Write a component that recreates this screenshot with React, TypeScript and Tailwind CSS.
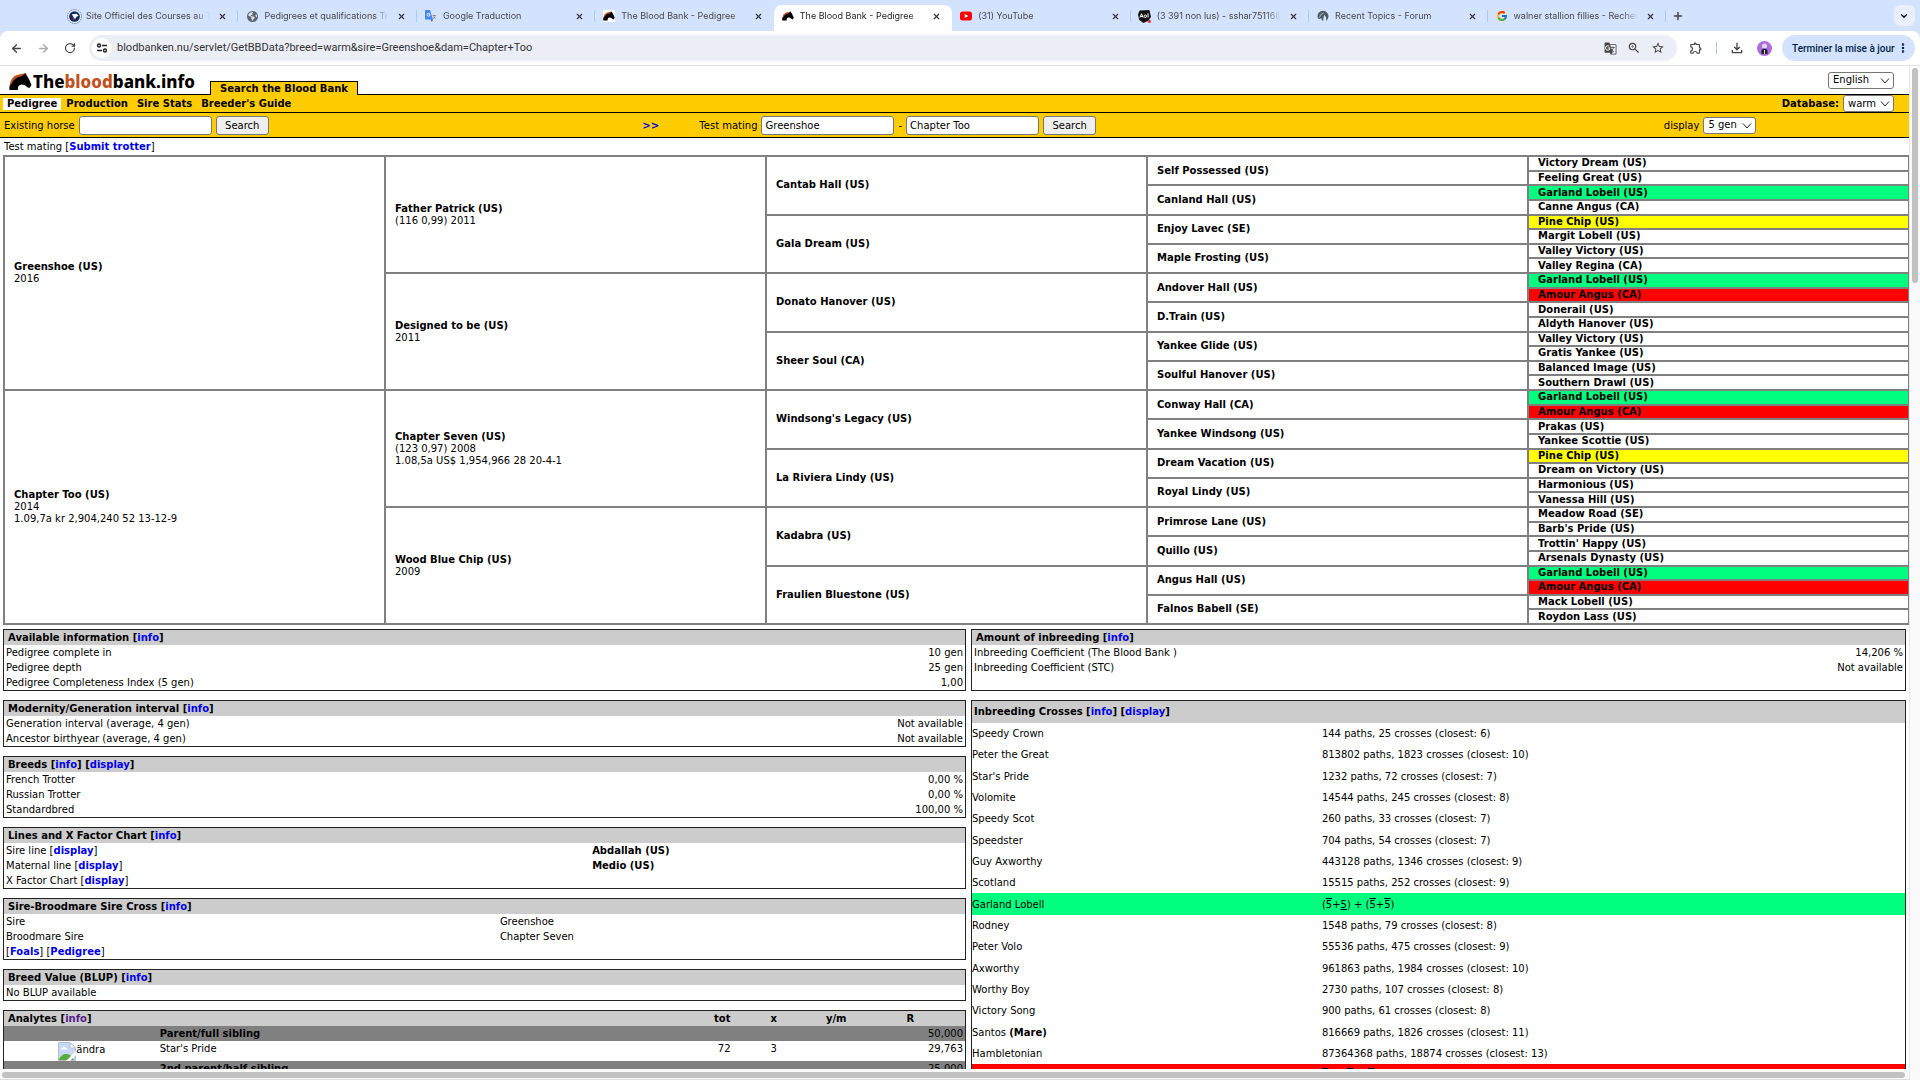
import React, { useState } from "react";
import { ArrowLeft, ArrowRight, ChevronDown, EllipsisVertical, Plus, RotateCw, X } from "lucide-react";
import { FcGoogle } from "react-icons/fc";
import { FaEarthAmericas } from "react-icons/fa6";
import { MdGTranslate, MdOutlineExtension, MdOutlineFileDownload, MdStarOutline, MdZoomIn } from "react-icons/md";

const Horse = ({ className }: { className?: string }) => (
  <svg viewBox="0 0 46 34" className={className} aria-hidden="true">
    <path d="M1 29 C1 20 4 12 10 7 C15 3 23 2 30 1 L34 0 L35 4 L22 8 C14 11 10 18 6 26 Z" fill="#c2501c" />
    <path
      d="M32 1 L35 4 C39 9 42 17 45 24 L41 30 C37 29 34 26 31 24 L25 23 C19 24 17 28 18 34 L1 34 C0 27 2 24 6 21 C9 12 16 8 26 6 Z"
      fill="#000"
    />
  </svg>
);

const CourseIcon = () => (
  <svg viewBox="0 0 28 28" className="size-[15px]" aria-hidden="true">
    <circle cx="14" cy="14" r="13" fill="#e8effc" stroke="#4a639a" strokeWidth="1.5" strokeDasharray="3 1.5" />
    <circle cx="14" cy="14" r="10" fill="#0f2a5c" />
    <path d="M9 10 L18 9 L22 13 L18 14 L15 19 L12 15 Z" fill="#fff" />
    <path d="M10 15 L14 19 L12 21 Z" fill="#d33" />
  </svg>
);

const TranslateIcon = () => (
  <svg viewBox="0 0 24 24" className="size-3" aria-hidden="true">
    <path d="M10 6 H22 Q24 6 24 8 V22 Q24 24 22 24 H14 Z" fill="#dfe1e5" />
    <path d="M2 0 H10 L16 19 H2 Q0 19 0 17 V2 Q0 0 2 0 Z" fill="#4486f4" />
    <path d="M11 19 H16 L14 24 Z" fill="#3057b9" />
    <circle cx="7" cy="9.5" r="3" fill="none" stroke="#fff" strokeWidth="1.6" />
    <path d="M7 9.5 H10" stroke="#fff" strokeWidth="1.6" />
    <path d="M15 11 H22 M18.5 9.5 V11 M20.5 11 Q19.5 16 15.5 18 M17 13 Q18.5 16 21.5 18" stroke="#6b7280" strokeWidth="1.3" fill="none" />
  </svg>
);

const YoutubeIcon = () => (
  <svg viewBox="0 0 24 24" className="size-3" aria-hidden="true">
    <rect x="0" y="3" width="24" height="18" rx="5" fill="#f00" />
    <path d="M9.5 8 L16.5 12 L9.5 16 Z" fill="#fff" />
  </svg>
);

const AolIcon = () => (
  <svg viewBox="0 0 24 24" className="size-[13px]" aria-hidden="true">
    <path d="M3 1 L21 0 L24 13 L19 20 L10 24 L2 18 L0 8 Z" fill="#111" />
    <path d="M3.5 14 L6.5 7 L9.5 14 M4.500 12 H8.5 M18.5 6 V14" stroke="#fff" strokeWidth="1.8" fill="none" />
    <circle cx="13.5" cy="11.5" r="2.3" stroke="#fff" strokeWidth="1.8" fill="none" />
    <circle cx="21" cy="21" r="3" fill="#e33" />
  </svg>
);

const ForumIcon = () => (
  <svg viewBox="0 0 24 24" className="size-3" aria-hidden="true">
    <path d="M1 13 A11 11 0 0 1 23 12 Q23 19 18 22 Q20 13 14 10 Q13 17 12 22 Q8 21 9 16 L5 18 Q1 18 1 13 Z" fill="#4f5b62" />
    <path d="M5 15 Q6 8 13 6" stroke="#cfd8e3" strokeWidth="1.5" fill="none" />
  </svg>
);

const BrokenImage = () => (
  <svg viewBox="0 0 18 19" className="h-[19px] w-[18px] shrink-0" role="img" aria-label="broken image">
    <path d="M0.5 0.5 H12 L17.5 6 V18.5 H0.5 Z" fill="#c5d9f7" stroke="#b9bdc4" />
    <path d="M12 0.5 V6 H17.5 Z" fill="#fff" stroke="#b9bdc4" />
    <path d="M2.5 7.5 Q3 5.5 5 5.5 Q6 3.5 7.5 5.5 Q9.5 5.5 9.5 7.5 Z" fill="#fff" />
    <path d="M1 18 V17 Q4 12 8 12 Q12 12 14 15 L16 18 Z" fill="#56ab3a" />
    <path d="M18 9 L8 19 H12 L18 13 Z" fill="#fff" />
  </svg>
);

const tabs = [
  { title: "Site Officiel des Courses au Trot", icon: <CourseIcon /> },
  { title: "Pedigrees et qualifications Trot", icon: <FaEarthAmericas className="size-[11px] text-[#5f6368]" /> },
  { title: "Google Traduction", icon: <TranslateIcon /> },
  { title: "The Blood Bank - Pedigree", icon: <Horse className="size-3 bg-white" /> },
  { title: "The Blood Bank - Pedigree", icon: <Horse className="size-3" />, active: true },
  { title: "(31) YouTube", icon: <YoutubeIcon /> },
  { title: "(3 391 non lus) - sshar75116@", icon: <AolIcon /> },
  { title: "Recent Topics - Forum", icon: <ForumIcon /> },
  { title: "walner stallion fillies - Recherche", icon: <FcGoogle className="size-3" /> },
];

const TabBar = () => (
  <div className="flex h-[31px] items-end bg-[#d3e3fd] pl-[60px] pr-[5px]">
    {tabs.map((tab, i) => (
      <div key={i} className={`relative flex h-[26px] min-w-0 flex-1 items-center pb-1 ${tab.active ? "rounded-t-lg bg-white" : ""}`}>
        <span className="ml-[6px] flex w-4 shrink-0 justify-center">{tab.icon}</span>
        <span
          className={`ml-1 flex-1 overflow-hidden whitespace-nowrap font-[Inter,sans-serif] text-[9px] leading-3 [mask-image:linear-gradient(to_right,black_88%,transparent)] ${
            tab.active ? "text-[#1f1f1f]" : "text-[#474747]"
          }`}
        >
          {tab.title}
        </span>
        <button aria-label="Close tab" className="ml-2 mr-[11px]">
          <X className="size-[9px] text-[#333]" strokeWidth={3} />
        </button>
        {i !== 3 && i !== 4 && <span className="absolute right-0 top-[5px] h-3 w-px bg-[#a8c7fa]" />}
      </div>
    ))}
    <button aria-label="New tab" className="ml-1.5 self-center">
      <Plus className="size-3 text-[#444]" strokeWidth={3} />
    </button>
    <div className="w-[210px]" />
    <button aria-label="Search tabs" className="mb-[5px] flex h-[21px] w-[21px] items-center justify-center rounded-md bg-[#e9effd]">
      <ChevronDown className="size-2.5" strokeWidth={3} />
    </button>
  </div>
);

const Toolbar = () => (
  <div className="bg-[#d3e3fd]">
    <div className="flex h-[35px] items-center rounded-t-lg border-b border-[#dfe1e5] bg-white pr-[5px] text-[#444]">
      <button aria-label="Back" className="ml-2.5">
        <ArrowLeft className="size-[13px]" strokeWidth={2.5} />
      </button>
      <button aria-label="Forward" className="ml-3.5 text-[#aaa]">
        <ArrowRight className="size-[13px]" strokeWidth={2.5} />
      </button>
      <button aria-label="Reload" className="ml-3.5">
        <RotateCw className="size-3" strokeWidth={2.5} />
      </button>
      <div className="ml-[13px] flex h-[26px] flex-1 items-center rounded-full bg-[#ebeef7] pl-[3px] pr-3">
        <span className="flex size-5 items-center justify-center rounded-full bg-white">
          <svg viewBox="0 0 12 12" className="size-3" fill="none" stroke="#222" strokeWidth="1.4">
            <circle cx="3" cy="3.5" r="1.5" />
            <path d="M6 3.5 H11 M1 8.5 H6" />
            <circle cx="9" cy="8.5" r="1.5" />
          </svg>
        </span>
        <input
          aria-label="Address"
          defaultValue="blodbanken.nu/servlet/GetBBData?breed=warm&sire=Greenshoe&dam=Chapter+Too"
          className="ml-[5px] flex-1 bg-transparent font-[Roboto,sans-serif] text-[11px] text-[#333] outline-none"
        />
        <div className="flex items-center gap-[10px]">
          <MdGTranslate className="size-[13px]" />
          <MdZoomIn className="size-[14px]" />
          <MdStarOutline className="size-[14px]" />
        </div>
      </div>
      <MdOutlineExtension className="ml-3 size-[14px]" />
      <span className="ml-[13px] h-3 w-px bg-[#a8c7fa]" />
      <MdOutlineFileDownload className="ml-3 size-4" />
      <svg viewBox="0 0 15 15" className="ml-3 size-[15px]" aria-hidden="true">
        <circle cx="7.5" cy="7.5" r="7.5" fill="#b06be0" />
        <circle cx="7.5" cy="5" r="2.5" fill="#ddd" />
        <path d="M4.5 13 V9 Q7.5 6 10.5 9 V13 Z" fill="#222" />
        <path d="M7.5 9 V13" stroke="#ddd" />
      </svg>
      <button className="ml-[10px] flex h-[26px] w-[133px] items-center justify-between whitespace-nowrap rounded-full bg-[#d3e3fd] pl-2.5 pr-1.5 font-[Roboto,sans-serif] text-[10px] font-medium text-[#041e49]">
        Terminer la mise à jour
        <EllipsisVertical className="size-3" strokeWidth={3} />
      </button>
    </div>
  </div>
);

interface DropdownProps {
  label: string;
  options: string[];
  className: string;
}

const Dropdown = ({ label, options, className }: DropdownProps) => (
  <span className={`relative inline-flex ${className}`}>
    <select
      aria-label={label}
      className="h-[17px] w-full appearance-none rounded-[3px] border border-[#767676] bg-white pl-1 text-[10px] leading-3 text-black"
    >
      {options.map((o) => (
        <option key={o}>{o}</option>
      ))}
    </select>
    <svg viewBox="0 0 10 6" className="pointer-events-none absolute right-1 top-[6px] h-[6px] w-[10px]" fill="none" stroke="#222">
      <path d="M1 0.5 L5 5 L9 0.5" />
    </svg>
  </span>
);

const inputClass = "h-[19px] w-[133px] rounded-[3px] border border-[#767676] bg-white px-[3px] text-[10px]";
const buttonClass = "h-[19px] w-[53px] rounded-[3px] border border-[#767676] bg-[#efefef] text-[10px]";

const SiteHeader = () => {
  const [horse, setHorse] = useState("");
  const [sire, setSire] = useState("Greenshoe");
  const [dam, setDam] = useState("Chapter Too");

  return (
    <header>
      <div className="flex h-[28px] items-end">
        <a href="#home" className="ml-[9px] flex w-[201px] items-center self-center pt-[3px]">
          <Horse className="h-[17px] w-[23px]" />
          <span className="ml-px font-['Noto_Sans',sans-serif] text-[17px] font-extrabold leading-5">
            The<span className="text-[#c2501c]">blood</span>bank.info
          </span>
        </a>
        <a href="#search" className="relative top-px flex h-[14px] items-center border border-b-0 border-black bg-[#fc0] px-[9px] font-bold">
          Search the Blood Bank
        </a>
        <div className="ml-auto mr-[15px] flex self-center">
          <Dropdown label="Language" options={["English", "Svenska"]} className="w-[66px]" />
        </div>
      </div>
      <nav className="flex h-[19px] items-center border-y border-black bg-[#fc0] pl-[3px] font-bold">
        <a href="#pedigree" className="bg-white px-1 leading-3">Pedigree</a>
        <a href="#production" className="ml-[5px]">Production</a>
        <a href="#sire" className="ml-[9px]">Sire Stats</a>
        <a href="#guide" className="ml-[9px]">Breeder's Guide</a>
        <span className="ml-auto mr-1">Database:</span>
        <span className="mr-[15px] flex font-normal">
          <Dropdown label="Database" options={["warm", "cold"]} className="w-[51px]" />
        </span>
      </nav>
      <form className="grid h-[25px] grid-cols-[638fr_57fr_964fr_245fr] items-center border-b border-black bg-[#fc0] pl-1" onSubmit={(e) => e.preventDefault()}>
        <div className="flex items-center gap-1">
          <label htmlFor="horse">Existing horse</label>
          <input id="horse" value={horse} onChange={(e) => setHorse(e.target.value)} className={inputClass} />
          <button className={buttonClass}>Search</button>
        </div>
        <a href="#more" className="font-bold text-[#0000ee]">&gt;&gt;</a>
        <div className="flex items-center gap-1">
          <label htmlFor="sire">Test mating</label>
          <input id="sire" value={sire} onChange={(e) => setSire(e.target.value)} className={inputClass} />
          <span>-</span>
          <input aria-label="Dam" value={dam} onChange={(e) => setDam(e.target.value)} className={inputClass} />
          <button className={buttonClass}>Search</button>
        </div>
        <div className="flex items-center gap-1">
          <span>display</span>
          <Dropdown label="Generations" options={["5 gen", "4 gen", "6 gen"]} className="w-[53px]" />
        </div>
      </form>
    </header>
  );
};

interface Ancestor {
  name: string;
  lines?: string[];
}

// one array per generation, top to bottom
const generations: Ancestor[][] = [
  [
    { name: "Greenshoe (US)", lines: ["2016"] },
    { name: "Chapter Too (US)", lines: ["2014", "1.09,7a kr 2,904,240 52 13-12-9"] },
  ],
  [
    { name: "Father Patrick (US)", lines: ["(116 0,99) 2011"] },
    { name: "Designed to be (US)", lines: ["2011"] },
    { name: "Chapter Seven (US)", lines: ["(123 0,97) 2008", "1.08,5a US$ 1,954,966 28 20-4-1"] },
    { name: "Wood Blue Chip (US)", lines: ["2009"] },
  ],
  [
    "Cantab Hall (US)", "Gala Dream (US)", "Donato Hanover (US)", "Sheer Soul (CA)",
    "Windsong's Legacy (US)", "La Riviera Lindy (US)", "Kadabra (US)", "Fraulien Bluestone (US)",
  ].map((name) => ({ name })),
  [
    "Self Possessed (US)", "Canland Hall (US)", "Enjoy Lavec (SE)", "Maple Frosting (US)",
    "Andover Hall (US)", "D.Train (US)", "Yankee Glide (US)", "Soulful Hanover (US)",
    "Conway Hall (CA)", "Yankee Windsong (US)", "Dream Vacation (US)", "Royal Lindy (US)",
    "Primrose Lane (US)", "Quillo (US)", "Angus Hall (US)", "Falnos Babell (SE)",
  ].map((name) => ({ name })),
  [
    "Victory Dream (US)", "Feeling Great (US)", "Garland Lobell (US)", "Canne Angus (CA)",
    "Pine Chip (US)", "Margit Lobell (US)", "Valley Victory (US)", "Valley Regina (CA)",
    "Garland Lobell (US)", "Amour Angus (CA)", "Donerail (US)", "Aldyth Hanover (US)",
    "Valley Victory (US)", "Gratis Yankee (US)", "Balanced Image (US)", "Southern Drawl (US)",
    "Garland Lobell (US)", "Amour Angus (CA)", "Prakas (US)", "Yankee Scottie (US)",
    "Pine Chip (US)", "Dream on Victory (US)", "Harmonious (US)", "Vanessa Hill (US)",
    "Meadow Road (SE)", "Barb's Pride (US)", "Trottin' Happy (US)", "Arsenals Dynasty (US)",
    "Garland Lobell (US)", "Amour Angus (CA)", "Mack Lobell (US)", "Roydon Lass (US)",
  ].map((name) => ({ name })),
];

const highlight: Record<string, string> = {
  "Garland Lobell (US)": "bg-[#00ff7f]",
  "Amour Angus (CA)": "bg-[#ff0000]",
  "Pine Chip (US)": "bg-[#ffff00]",
};

const PedigreeTable = () => (
  <table className="ml-[3px] h-[470px] w-[calc(100%-2px)] table-fixed border-collapse border-2 border-[#808080]">
    <tbody>
      {generations[4].map((_, row) => (
        <tr key={row}>
          {generations.map((list, g) => {
            const span = 32 / list.length;
            if (row % span !== 0) return null;
            const a = list[row / span];
            return (
              <td key={g} rowSpan={span} className={`border-2 border-[#808080] py-0 pl-[9px] leading-3 ${highlight[a.name] || ""}`}>
                <div className="font-bold">{a.name}</div>
                {a.lines?.map((l) => <div key={l}>{l}</div>)}
              </td>
            );
          })}
        </tr>
      ))}
    </tbody>
  </table>
);

const Link = ({ children, visited }: { children: React.ReactNode; visited?: boolean }) => (
  <>
    [<a href="#info" className={`font-bold ${visited ? "text-[#551a8b]" : "text-[#0000ee]"}`}>{children}</a>]
  </>
);

interface PanelProps {
  title: React.ReactNode;
  rows: [React.ReactNode, React.ReactNode?][];
  split?: string;
  valueClass?: string;
}

const Panel = ({ title, rows, split = "w-1/2", valueClass = "text-right" }: PanelProps) => (
  <section className="border border-[#222]">
    <h2 className="bg-[#ccc] px-1 font-bold leading-[15px]">{title}</h2>
    <table className="w-full table-fixed border-collapse">
      <tbody>
        {rows.map(([label, value], i) => (
          <tr key={i} className="h-[15px] leading-[15px]">
            <td className={`p-0 pl-0.5 ${split}`}>{label}</td>
            <td className={`p-0 pr-0.5 ${valueClass}`}>{value}</td>
          </tr>
        ))}
      </tbody>
    </table>
  </section>
);

const Analytes = () => (
  <section className="border border-[#222]">
    <table className="w-full table-fixed border-collapse">
      <colgroup>
        <col className="w-[16.2%]" />
        <col />
        <col className="w-[7%]" />
        <col className="w-[9%]" />
        <col className="w-[4%]" />
        <col className="w-[11.4%]" />
      </colgroup>
      <thead>
        <tr className="h-[15px] bg-[#ccc] leading-[15px]">
          <th colSpan={2} className="p-0 pl-1 text-left">Analytes <Link visited>info</Link></th>
          <th className="p-0 text-right">tot</th>
          <th className="p-0">x</th>
          <th className="p-0">y/m</th>
          <th className="p-0">R</th>
        </tr>
      </thead>
      <tbody>
        <tr className="h-[15px] bg-[#808080] leading-[15px]">
          <td className="p-0" />
          <td className="p-0 font-bold">Parent/full sibling</td>
          <td colSpan={4} className="p-0 pr-0.5 text-right">50,000</td>
        </tr>
        <tr className="h-5 leading-[15px]">
          <td className="p-0">
            <a href="#edit" className="flex justify-center">
              <BrokenImage />ändra
            </a>
          </td>
          <td className="p-0 align-top">Star's Pride</td>
          <td className="p-0 text-right align-top">72</td>
          <td className="p-0 text-center align-top">3</td>
          <td />
          <td className="p-0 pr-0.5 text-right align-top">29,763</td>
        </tr>
        <tr className="h-[15px] bg-[#808080] leading-[15px]">
          <td className="p-0" />
          <td className="p-0 font-bold">2nd parent/half sibling</td>
          <td colSpan={4} className="p-0 pr-0.5 text-right">25,000</td>
        </tr>
      </tbody>
    </table>
  </section>
);

const Over = () => <span className="overline">5</span>;

const crosses: { name: React.ReactNode; value: React.ReactNode; bg?: string }[] = [
  { name: "Speedy Crown", value: "144 paths, 25 crosses (closest: 6)" },
  { name: "Peter the Great", value: "813802 paths, 1823 crosses (closest: 10)" },
  { name: "Star's Pride", value: "1232 paths, 72 crosses (closest: 7)" },
  { name: "Volomite", value: "14544 paths, 245 crosses (closest: 8)" },
  { name: "Speedy Scot", value: "260 paths, 33 crosses (closest: 7)" },
  { name: "Speedster", value: "704 paths, 54 crosses (closest: 7)" },
  { name: "Guy Axworthy", value: "443128 paths, 1346 crosses (closest: 9)" },
  { name: "Scotland", value: "15515 paths, 252 crosses (closest: 9)" },
  {
    name: "Garland Lobell",
    value: <>(<Over />+<span className="underline">5</span>) + (<Over />+<Over />)</>,
    bg: "bg-[#00ff7f]",
  },
  { name: "Rodney", value: "1548 paths, 79 crosses (closest: 8)" },
  { name: "Peter Volo", value: "55536 paths, 475 crosses (closest: 9)" },
  { name: "Axworthy", value: "961863 paths, 1984 crosses (closest: 10)" },
  { name: "Worthy Boy", value: "2730 paths, 107 crosses (closest: 8)" },
  { name: "Victory Song", value: "900 paths, 61 crosses (closest: 8)" },
  { name: <>Santos <b>(Mare)</b></>, value: "816669 paths, 1826 crosses (closest: 11)" },
  { name: "Hambletonian", value: "87364368 paths, 18874 crosses (closest: 13)" },
  { name: "Amour Angus", value: <><Over /> + (<Over /> + <Over />)</>, bg: "bg-[#ff0000]" },
];

const Crosses = () => (
  <section className="border border-[#222]">
    <h2 className="bg-[#ccc] px-0.5 font-bold leading-[22px]">
      Inbreeding Crosses <Link>info</Link> <Link>display</Link>
    </h2>
    <table className="w-full table-fixed border-collapse">
      <tbody>
        {crosses.map((c, i) => (
          <tr key={i} className={`h-[21px] nth-[3n]:h-[22px] ${c.bg || ""}`}>
            <td className="w-[37.5%] p-0">{c.name}</td>
            <td className="p-0">{c.value}</td>
          </tr>
        ))}
      </tbody>
    </table>
  </section>
);

const App = () => (
  <div className="flex h-screen flex-col overflow-hidden bg-white">
    <TabBar />
    <Toolbar />
    <div className="flex min-h-0 flex-1 font-['DejaVu_Sans',sans-serif] text-[10px] leading-[15px] text-black">
      <div className="flex min-w-0 flex-1 flex-col">
        <main className="min-h-0 flex-1 overflow-hidden">
          <SiteHeader />
          <p className="py-px pl-1">
            Test mating <Link>Submit trotter</Link>
          </p>
          <PedigreeTable />
          <div className="mt-1 grid grid-cols-[963fr_935fr] gap-x-[5px] pl-[3px] pr-[3px]">
            <div className="flex flex-col gap-[9px]">
              <Panel
                title={<>Available information <Link>info</Link></>}
                rows={[["Pedigree complete in", "10 gen"], ["Pedigree depth", "25 gen"], ["Pedigree Completeness Index (5 gen)", "1,00"]]}
              />
              <Panel
                title={<>Modernity/Generation interval <Link>info</Link></>}
                rows={[["Generation interval (average, 4 gen)", "Not available"], ["Ancestor birthyear (average, 4 gen)", "Not available"]]}
              />
              <Panel
                title={<>Breeds <Link>info</Link> <Link>display</Link></>}
                rows={[["French Trotter", "0,00 %"], ["Russian Trotter", "0,00 %"], ["Standardbred", "100,00 %"]]}
              />
              <Panel
                title={<>Lines and X Factor Chart <Link>info</Link></>}
                split="w-[61.2%]"
                valueClass="font-bold"
                rows={[
                  [<>Sire line <Link>display</Link></>, "Abdallah (US)"],
                  [<>Maternal line <Link>display</Link></>, "Medio (US)"],
                  [<>X Factor Chart <Link>display</Link></>],
                ]}
              />
              <Panel
                title={<>Sire-Broodmare Sire Cross <Link>info</Link></>}
                split="w-[51.6%]"
                valueClass=""
                rows={[["Sire", "Greenshoe"], ["Broodmare Sire", "Chapter Seven"], [<><Link>Foals</Link> <Link>Pedigree</Link></>]]}
              />
              <Panel title={<>Breed Value (BLUP) <Link>info</Link></>} rows={[["No BLUP available"]]} />
              <Analytes />
            </div>
            <div className="flex flex-col gap-[9px]">
              <Panel
                title={<>Amount of inbreeding <Link>info</Link></>}
                rows={[["Inbreeding Coefficient (The Blood Bank )", "14,206 %"], ["Inbreeding Coefficient (STC)", "Not available"], [""]]}
              />
              <Crosses />
            </div>
          </div>
        </main>
        <div className="h-[11px] border-b border-[#ddd] bg-[#fafafa] pl-0.5 pr-1 pt-[3px]">
          <div className="h-1.5 rounded-full bg-[#c1c1c1]" />
        </div>
      </div>
      <div className="w-[11px] border-l border-[#e8e8e8] bg-[#fafafa] px-0.5 pt-0.5">
        <div className="h-[215px] rounded-full bg-[#c1c1c1]" />
      </div>
    </div>
  </div>
);

export default App;
